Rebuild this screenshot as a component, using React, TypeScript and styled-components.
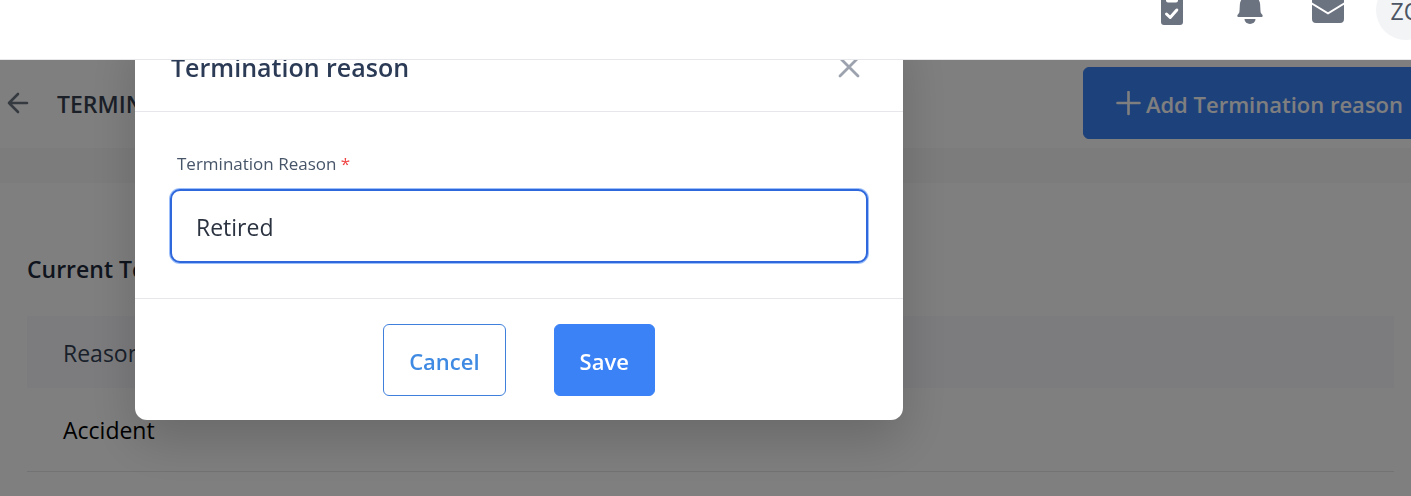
import React, { useState } from 'react';
import styled, { createGlobalStyle } from 'styled-components';

const GlobalStyle = createGlobalStyle`
  * { box-sizing: border-box; }
  html, body { margin: 0; overflow: hidden; }
  body { background: #fff; }
  body, button, input { font-family: 'Open Sans', 'Noto Sans', sans-serif; }
`;

const Page = styled.div`
  min-height: 100vh;
  font-size: 23px;
  line-height: 36px;
  color: #000;
`;

const TopBar = styled.header`
  position: relative;
  z-index: 20;
  display: flex;
  justify-content: flex-end;
  align-items: flex-end;
  gap: 18px;
  height: 60px;
  padding-bottom: 19px;
  margin-right: -25px;
  background: #fff;
  border-bottom: 1px solid #e5e7eb;
`;

const RoundButton = styled.button<{ $filled?: boolean }>`
  flex: none;
  display: flex;
  align-items: center;
  justify-content: center;
  width: 60px;
  height: 60px;
  padding: ${(p) => (p.$filled ? 2 : 0)}px 0 0;
  border: 0;
  border-radius: 50%;
  background: ${(p) => (p.$filled ? '#f3f4f6' : 'transparent')};
  color: ${(p) => (p.$filled ? '#4b5563' : '#6b7280')};
  font-size: 23px;
  font-weight: 500;
`;

const TitleBar = styled.div`
  display: flex;
  align-items: center;
  justify-content: space-between;
  height: 88px;
  margin-right: -25px;
  padding: 0 0 2px 4px;
`;

const Heading = styled.div`
  display: flex;
  align-items: center;
  gap: 25px;
`;

const BackButton = styled.button`
  display: flex;
  padding: 0;
  border: 0;
  background: none;
  color: #6b7280;
`;

const PageTitle = styled.h1`
  margin: 0;
  padding-top: 2px;
  font-size: 23px;
  line-height: 36px;
  font-weight: 600;
  color: #374151;
`;

const Button = styled.button<{ $outline?: boolean; $wide?: boolean }>`
  display: flex;
  align-items: center;
  gap: 4px;
  height: 72px;
  padding: 1px ${(p) => (p.$wide ? 32 : 25)}px 0;
  border: 1px solid ${(p) => (p.$outline ? '#3f80dc' : '#3b82f6')};
  border-radius: 6px;
  background: ${(p) => (p.$outline ? '#fff' : '#3b82f6')};
  color: ${(p) => (p.$outline ? '#3f8ae2' : '#fff')};
  font-size: 22px;
  font-weight: 600;
  white-space: nowrap;
`;

const Band = styled.div`
  height: 35px;
  background: #f9f9f9;
`;

const Content = styled.main`
  padding: 68px 17px 0 27px;
`;

const SectionTitle = styled.h2`
  margin: 0 0 29px;
  font-size: 23px;
  line-height: 36px;
  font-weight: 600;
  color: #1e293b;
`;

const Table = styled.table`
  width: 100%;
  border-collapse: collapse;
  text-align: left;
`;

const HeadCell = styled.th`
  height: 72px;
  padding: 2px 36px 0;
  background: #f8f8fc;
  color: #334155;
  font-weight: 400;
`;

const Cell = styled.td`
  height: 83px;
  padding: 2px 36px 0;
  border-bottom: 1px solid #e5e7eb;
`;

const Backdrop = styled.div`
  position: fixed;
  inset: 0;
  z-index: 10;
  padding: 24px 24px 0 135px;
  background: rgba(0, 0, 0, 0.5);
`;

const Dialog = styled.form`
  max-width: 768px;
  border-radius: 12px;
  background: #fff;
  box-shadow: 0 20px 50px rgba(0, 0, 0, 0.18);
`;

const DialogHeader = styled.div`
  display: flex;
  align-items: center;
  justify-content: space-between;
  height: 88px;
  padding: 0 36px 2px;
  border-bottom: 1px solid #e5e7eb;
`;

const DialogTitle = styled.h2`
  margin: 0;
  font-size: 25px;
  line-height: 36px;
  font-weight: 600;
  color: #2b3a55;
`;

const CloseButton = styled.button`
  display: flex;
  padding: 0;
  border: 0;
  background: none;
  color: #9ca3af;
`;

const DialogBody = styled.div`
  display: flex;
  flex-direction: column;
  gap: 9px;
  padding: 36px 35px 35px;
`;

const Label = styled.label`
  padding-left: 7px;
  font-size: 17px;
  line-height: 32px;
  color: #475569;
`;

const Required = styled.span`
  color: #ef4444;
`;

const TextInput = styled.input`
  width: 100%;
  height: 74px;
  padding: 2px 24px 0;
  border: 2px solid #2f67dc;
  border-radius: 10px;
  outline: none;
  box-shadow: 0 0 0 1px rgba(59, 130, 246, 0.5);
  background: #fff;
  color: #2b3240;
  font-size: 23px;
`;

const DialogFooter = styled.div`
  display: flex;
  justify-content: center;
  gap: 48px;
  padding: 25px 36px 24px;
  border-top: 1px solid #e5e7eb;
`;

const ClipboardIcon = () => (
  <svg width="32" height="32" viewBox="0 0 32 32" aria-hidden="true">
    <path d="M8 2h3a5 5 0 0 1 10 0h3a3 3 0 0 1 3 3v23a3 3 0 0 1-3 3H8a3 3 0 0 1-3-3V5a3 3 0 0 1 3-3z" fill="currentColor" />
    <path d="M10 4v2.500a2 2 0 0 0 2 2h8a2 2 0 0 0 2-2V4z" fill="#fff" />
    <path d="M10.500 20l3.700 3.500 6.600-7.500" fill="none" stroke="#fff" strokeWidth="3" strokeLinecap="round" strokeLinejoin="round" />
  </svg>
);

const BellIcon = () => (
  <svg width="32" height="32" viewBox="0 0 32 32" aria-hidden="true">
    <path d="M16 0a1.800 1.800 0 0 1 1.800 1.800c5 .8 8 4 8.300 8.200l.4 7c.1 1.600.5 2.400 1.400 3.200 1.300 1.100.9 2.800-.6 2.800H4.700c-1.500 0-1.900-1.700-.6-2.800.9-.8 1.300-1.600 1.400-3.200l.4-7C6.200 5.800 9.200 2.600 14.200 1.800A1.800 1.800 0 0 1 16 0z" fill="currentColor" />
    <path d="M10.500 25h11a5.500 5 0 0 1-11 0z" fill="currentColor" />
  </svg>
);

const MailIcon = () => (
  <svg width="32" height="32" viewBox="0 0 32 32" aria-hidden="true">
    <path d="M4 3h24a4 4 0 0 1 4 4v1.500L16 18.300 0 8.500V7a4 4 0 0 1 4-4z" fill="currentColor" />
    <path d="M0 10.800l16 9.800 16-9.800V25a4 4 0 0 1-4 4H4a4 4 0 0 1-4-4z" fill="currentColor" />
  </svg>
);

const BackIcon = () => (
  <svg width="28" height="28" viewBox="0 0 28 28" fill="none" stroke="currentColor" strokeWidth="2.600" strokeLinecap="round" strokeLinejoin="round" aria-hidden="true">
    <path d="M14 5l-9 9 9 9M5 14h18" />
  </svg>
);

const PlusIcon = () => (
  <svg width="26" height="26" viewBox="0 0 26 26" fill="none" stroke="currentColor" strokeWidth="2.600" strokeLinecap="round" aria-hidden="true">
    <path d="M12.500 1v22M1.500 12h22" />
  </svg>
);

const CloseIcon = () => (
  <svg width="36" height="36" viewBox="0 0 36 36" fill="none" stroke="currentColor" strokeWidth="2.800" strokeLinecap="round" aria-hidden="true">
    <path d="M9 9l18 18M27 9L9 27" />
  </svg>
);

export default function App() {
  const [reason, setReason] = useState('Retired');

  return (
    <>
      <GlobalStyle />
      <Page>
        <TopBar>
          <RoundButton aria-label="Tasks"><ClipboardIcon /></RoundButton>
          <RoundButton aria-label="Notifications"><BellIcon /></RoundButton>
          <RoundButton aria-label="Messages"><MailIcon /></RoundButton>
          <RoundButton $filled>ZO</RoundButton>
        </TopBar>
        <TitleBar>
          <Heading>
            <BackButton aria-label="Back"><BackIcon /></BackButton>
            <PageTitle>TERMINATION</PageTitle>
          </Heading>
          <Button $wide><PlusIcon />Add Termination reason</Button>
        </TitleBar>
        <Band />
        <Content>
          <SectionTitle>Current Termination</SectionTitle>
          <Table>
            <thead>
              <tr><HeadCell scope="col">Reason</HeadCell></tr>
            </thead>
            <tbody>
              <tr><Cell>Accident</Cell></tr>
            </tbody>
          </Table>
        </Content>
        <Backdrop>
          <Dialog role="dialog" aria-labelledby="dialog-title" onSubmit={(e) => e.preventDefault()}>
            <DialogHeader>
              <DialogTitle id="dialog-title">Termination reason</DialogTitle>
              <CloseButton type="button" aria-label="Close"><CloseIcon /></CloseButton>
            </DialogHeader>
            <DialogBody>
              <Label htmlFor="reason">Termination Reason <Required>*</Required></Label>
              <TextInput id="reason" value={reason} onChange={(e) => setReason(e.target.value)} />
            </DialogBody>
            <DialogFooter>
              <Button type="button" $outline>Cancel</Button>
              <Button type="submit">Save</Button>
            </DialogFooter>
          </Dialog>
        </Backdrop>
      </Page>
    </>
  );
}
